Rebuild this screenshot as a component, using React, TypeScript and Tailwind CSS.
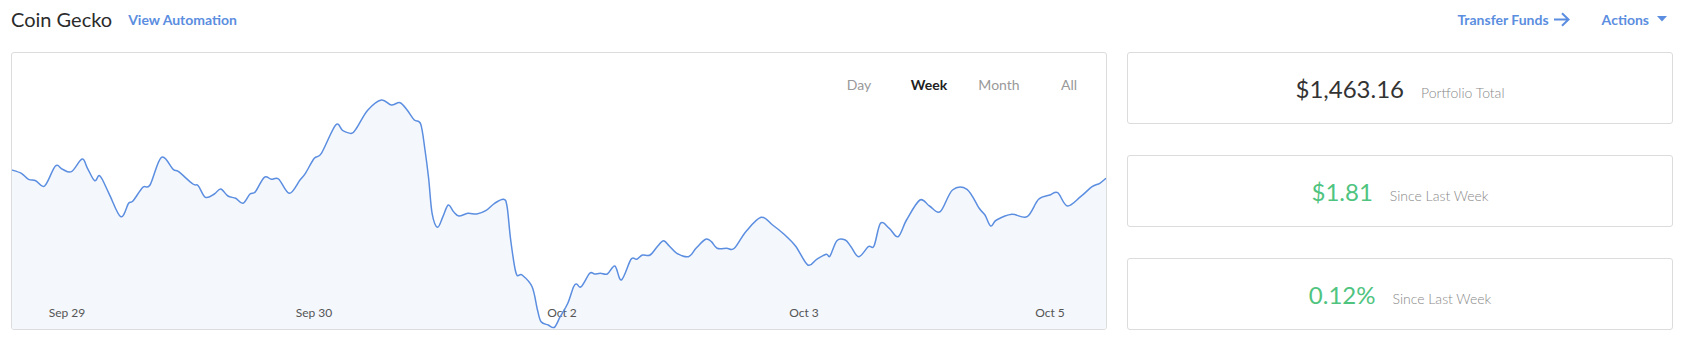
import React from "react";

// price samples, page coordinates of the reference (x, y)
const points: [number, number][] = [
	[11.8, 170], [21.4, 173.3], [28.6, 179.3], [35.7, 180.7], [44.6, 186], [55.4, 166], [62.5, 169.3], [71.4, 171.7],
	[82.1, 159], [87.5, 168.3], [94.6, 180.7], [100, 176], [108.9, 193.3], [120.7, 216.7], [128.6, 203.3], [132.9, 201],
	[142.9, 187.3], [150, 185], [161.4, 157.3], [173.2, 169.3], [178.6, 171.7], [192.9, 184], [198.2, 185.7], [205.4, 197.3],
	[214.3, 194], [220.7, 189], [227.9, 196], [235.7, 198.3], [242.9, 203.3], [250, 194], [255.4, 191.7], [264.3, 177.3],
	[271.4, 179.3], [278.6, 179], [289.3, 193.3], [300, 180], [305.4, 173.3], [314.3, 158.3], [321.4, 153.3], [335.7, 125],
	[342.9, 130.7], [351.8, 133.3], [357.1, 127.3], [367.9, 110], [381.4, 100], [391.1, 105], [400, 102.7], [407.1, 110],
	[414.3, 120], [420.7, 124], [425, 150], [428.6, 178], [432.1, 213.3], [437.5, 227.3], [442.9, 216.7], [448.2, 205],
	[453.6, 211.7], [458.9, 216], [467.9, 213.3], [476.8, 214], [485.7, 210.7], [494.6, 203.3], [503.6, 199.3], [507.1, 206.7],
	[510.7, 240], [516.1, 273.3], [522.1, 275], [532.1, 286.7], [537.5, 310], [541.1, 321.7], [548.2, 325], [554.4, 327.3],
	[560.2, 316.7], [567.8, 303.3], [573.6, 286.7], [576.6, 284], [581.2, 286.7], [589.7, 273.3], [594.6, 274], [600.4, 273.3],
	[607.3, 274], [614.9, 266], [621.4, 280], [631, 259.3], [636.7, 259.3], [642.5, 255], [650.1, 255], [657.8, 246],
	[663.5, 240.7], [669.3, 246], [676.9, 253.3], [688.4, 256.7], [696, 248.3], [705.6, 239.3], [711.4, 241.7], [717.1, 248.3],
	[726.7, 248.3], [734.3, 248.3], [745.8, 231.7], [761.1, 217.3], [772.6, 225], [784.1, 234.3], [795.5, 246], [807.8, 265],
	[816.6, 259.3], [826.2, 254.3], [830, 256], [836.9, 240.7], [845.3, 240], [851, 246.7], [858.7, 256.7], [868.3, 246.7],
	[874, 246], [880.5, 223.3], [889.3, 228.3], [898.1, 236.7], [906.5, 220], [919.9, 200], [929.5, 206], [940.2, 211.7],
	[952.5, 190], [967, 189.3], [979.2, 208.3], [985, 215], [990.7, 226], [996.5, 220], [1011.8, 214.3], [1027.1, 216.7],
	[1038.6, 199.3], [1050, 195], [1057.7, 192.7], [1067.3, 206], [1080.6, 196.7], [1092.1, 186.7], [1099.8, 183.3], [1106, 178.3],
];

const W = 1094;
const H = 276;

const axis = [
	{ x: 55, label: "Sep 29" },
	{ x: 302, label: "Sep 30" },
	{ x: 550, label: "Oct 2" },
	{ x: 792, label: "Oct 3" },
	{ x: 1038, label: "Oct 5" },
];

function smoothPath(pts: [number, number][]) {
	const p = pts.map(([x, y]) => [Math.max(0, Math.min(W, x - 12)), y - 53]);
	let d = `M${p[0][0]},${p[0][1]}`;
	for (let i = 0; i < p.length - 1; i++) {
		const p0 = p[i - 1] ?? p[i];
		const p1 = p[i];
		const p2 = p[i + 1];
		const p3 = p[i + 2] ?? p2;
		const c1x = p1[0] + (p2[0] - p0[0]) / 6;
		const c1y = p1[1] + (p2[1] - p0[1]) / 6;
		const c2x = p2[0] - (p3[0] - p1[0]) / 6;
		const c2y = p2[1] - (p3[1] - p1[1]) / 6;
		d += ` C${c1x.toFixed(1)},${c1y.toFixed(1)} ${c2x.toFixed(1)},${c2y.toFixed(1)} ${p2[0].toFixed(1)},${p2[1].toFixed(1)}`;
	}
	return d;
}

const tabs = ["Day", "Week", "Month", "All"];

function Chart() {
	const line = smoothPath(points);
	const area = `${line} L${W},${H} L0,${H} Z`;
	return (
		<div className="relative h-full flex-1 overflow-hidden rounded-[3px] border border-[#dcdcdc] bg-white">
			<svg viewBox={`0 0 ${W} ${H}`} className="block h-full w-full" preserveAspectRatio="none">
				<path d={area} fill="#f4f7fc" />
				{axis.map((a) => (
					<text key={a.label} x={a.x} y={261} textAnchor="middle" dominantBaseline="middle" fontSize="12" fill="#555" fontFamily="Lato, sans-serif">
						{a.label}
					</text>
				))}
				<path d={line} fill="none" stroke="#5b8ee0" strokeWidth="1.5" strokeLinejoin="round" />
			</svg>
			<div className="absolute top-[21px] right-[2px] flex text-[14px]">
				{tabs.map((t) => (
					<div key={t} className={t === "Week" ? "w-[70px] text-center font-bold text-[#222]" : "w-[70px] text-center text-[#999]"}>
						{t}
					</div>
				))}
			</div>
		</div>
	);
}

function Stat({ value, label, green }: { value: string; label: string; green?: boolean }) {
	return (
		<div className="flex h-[72px] items-center justify-center rounded-[3px] border border-[#dcdcdc] bg-white pt-[2px]">
			<div className="flex items-baseline gap-[17px]">
				<span className={green ? "text-[24px] leading-none text-[#4fc47f]" : "text-[24px] leading-none text-[#333]"}>{value}</span>
				<span className="text-[14px] leading-none font-light text-[#888]">{label}</span>
			</div>
		</div>
	);
}

export default function App() {
	return (
		<div className="h-[340px] w-full bg-white pr-[15px] pl-[11px] font-['Lato',sans-serif]">
			<div className="flex h-[38px] items-center justify-between">
				<div className="flex items-center gap-4">
					<span className="text-[20px] text-[#2b2b2b]">Coin Gecko</span>
					<span className="text-[14px] font-bold text-[#5b8ee0]">View Automation</span>
				</div>
				<div className="flex items-center gap-8 pr-[6px] text-[14px] font-bold text-[#5b8ee0]">
					<span className="flex items-center gap-1">
						Transfer Funds
						<svg width="17" height="15" viewBox="0 0 17 15" fill="none" stroke="currentColor" strokeWidth="2">
							<path d="M1 7.5H15.5M9 1.2L15.5 7.5L9 13.8" />
						</svg>
					</span>
					<span className="flex items-center gap-2">
						Actions
						<svg width="10" height="6" viewBox="0 0 10 6" fill="currentColor">
							<path d="M0 0H10L5 5.5Z" />
						</svg>
					</span>
				</div>
			</div>
			<div className="mt-[14px] flex h-[278px] gap-5">
				<Chart />
				<div className="flex w-[546px] flex-col justify-between">
					<Stat value="$1,463.16" label="Portfolio Total" />
					<Stat value="$1.81" label="Since Last Week" green />
					<Stat value="0.12%" label="Since Last Week" green />
				</div>
			</div>
		</div>
	);
}
